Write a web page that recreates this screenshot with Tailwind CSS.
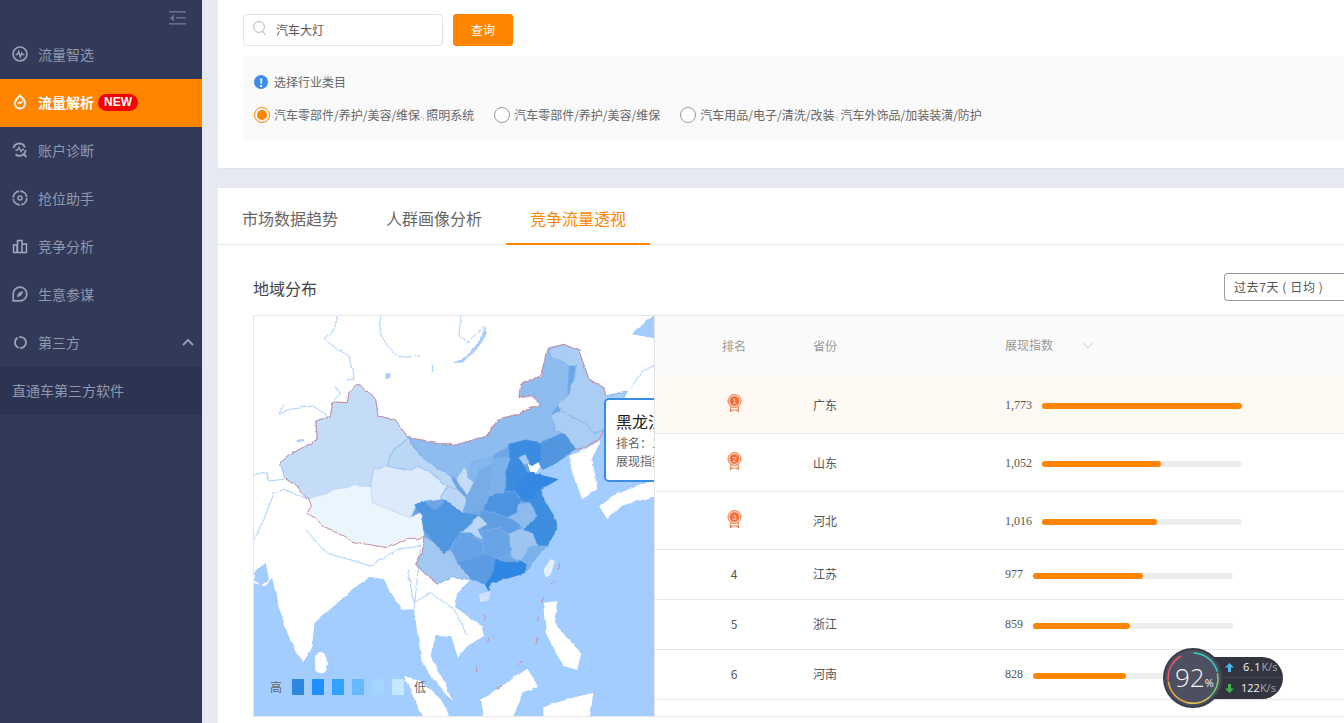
<!DOCTYPE html>
<html lang="zh">
<head>
  <meta charset="UTF-8" />
  <title>流量解析</title>
  <script src="https://cdn.jsdelivr.net/npm/@tailwindcss/browser@4"></script>
</head>
<body class="font-['Noto_Sans_CJK_SC','Liberation_Sans',sans-serif] text-[#666] overflow-hidden">
<div class="relative flex w-[1344px] h-[723px] overflow-hidden bg-[#e6e9f2]">

  <!-- sidebar -->
  <aside class="w-[202px] shrink-0 bg-[#313a59] text-[14px] text-[#9298aa]">
    <div class="h-[31px] flex justify-end pt-[11px] pr-[16px]">
      <svg width="17" height="14" viewBox="0 0 17 14" fill="#666e88"><rect x="0" y="0" width="17" height="1.6"/><rect x="7" y="6" width="10" height="1.6"/><rect x="0" y="12" width="17" height="1.6"/><path d="M5 3.5v7L0.5 7z"/></svg>
    </div>
    <div class="h-12 flex items-center pl-[12px] gap-[10px] pb-[2px]">
      <svg width="16" height="16" viewBox="0 0 16 16" fill="none" stroke="#9ba0b2" stroke-width="1.7"><circle cx="8" cy="8" r="7"/><path d="M3.5 8.5h2l1.2-3 1.6 5.5 1.4-4 .8 1.500h2" stroke-width="1.4"/></svg>
      <span>流量智选</span>
    </div>
    <div class="h-12 flex items-center pl-[12px] gap-[10px] pb-[2px] bg-[#ff8400] text-white font-bold">
      <svg width="16" height="16" viewBox="0 0 16 16" fill="none" stroke="#fff" stroke-width="1.8"><path d="M8 1.5c1 1.6 5 3.6 5 8a5 5 0 0 1-10 0c0-4.400 4-6.400 5-8z"/><path d="M5.500 10l2-2 1 1.200 2-2" stroke-width="1.300"/></svg>
      <span>流量解析</span>
      <span class="-ml-[6px] w-[40px] h-[17px] rounded-full bg-[#f60000] text-[12px] leading-[17px] text-center font-['Liberation_Sans',sans-serif]">NEW</span>
    </div>
    <div class="h-12 flex items-center pl-[12px] gap-[10px] pb-[2px]">
      <svg width="16" height="16" viewBox="0 0 16 16" fill="none" stroke="#9ba0b2" stroke-width="1.9"><path d="M1.500 6A6 6 0 0 1 13 5.500M13.500 8a6 6 0 0 1-10 4.300"/><path d="M11 11.500l3.500 3.500"/><path d="M3.500 8h2l1.500-2.500 2 4 1.500-2h1.500" stroke-width="1.400"/></svg>
      <span>账户诊断</span>
    </div>
    <div class="h-12 flex items-center pl-[12px] gap-[10px] pb-[2px]">
      <svg width="16" height="16" viewBox="0 0 16 16" fill="none" stroke="#9ba0b2" stroke-width="1.800"><circle cx="8" cy="8" r="6.800" stroke-dasharray="9.500 1.200"/><circle cx="8" cy="8" r="2" stroke-width="1.500"/></svg>
      <span>抢位助手</span>
    </div>
    <div class="h-12 flex items-center pl-[12px] gap-[10px] pb-[2px]">
      <svg width="16" height="16" viewBox="0 0 16 16" fill="none" stroke="#a4a9b9" stroke-width="1.500"><path d="M1.500 14.500V7h3.500v7.500M5.500 14.500V2.500h4.500v12M10 14.500V6h4.500v8.500M1 14.500h14"/></svg>
      <span>竞争分析</span>
    </div>
    <div class="h-12 flex items-center pl-[12px] gap-[10px] pb-[2px]">
      <svg width="16" height="16" viewBox="0 0 16 16" fill="none" stroke="#9ba0b2" stroke-width="1.700"><path d="M1.200 14.800V8A6.800 6.800 0 1 1 8 14.800z"/><path d="M5 11c.2-3.300 2-5 6-6-.5 4-2.500 5.800-6 6z" fill="#9ba0b2" stroke="none"/></svg>
      <span>生意参谋</span>
    </div>
    <div class="h-12 flex items-center pl-[14px] gap-[11px] pr-[8px] pb-[2px]">
      <svg width="13" height="13" viewBox="0 0 13 13" fill="none" stroke="#a4a9b9" stroke-width="1.700"><circle cx="6.500" cy="6.500" r="5.500" stroke-dasharray="9 1.200 12 1.500 10 1"/></svg>
      <span>第三方</span>
      <svg class="ml-auto" width="12" height="8" viewBox="0 0 12 8" fill="none" stroke="#9ba0b2" stroke-width="1.800"><path d="M1 7l5-5 5 5"/></svg>
    </div>
    <div class="h-12 flex items-center pl-[12px] pb-[2px] bg-[#2c3452] text-[14px]">直通车第三方软件</div>
  </aside>

  <main class="flex-1 min-w-0 pl-4">
    <!-- search card -->
    <section class="h-[169px] bg-white pt-[14px] pl-[25px] border-b border-[#dfe2ea] rounded-bl-[3px]">
      <div class="flex gap-[10px] text-[12px]">
        <div class="w-[200px] h-8 flex items-center border border-[#e3e3e3] rounded-[4px] pl-[9px] gap-[9px]">
          <svg class="-mt-[3px]" width="14" height="16" viewBox="0 0 14 16" fill="none" stroke="#b5b5b5" stroke-width="1"><circle cx="6" cy="6" r="5.400"/><path d="M9.500 10l3 4"/></svg>
          <span class="text-[#555]">汽车大灯</span>
        </div>
        <button class="w-[60px] h-8 rounded-[3px] bg-[#ff8400] text-white">查询</button>
      </div>
      <div class="mt-[10px] h-[84px] bg-[#fafafa] pl-[11px] pt-[17px] text-[12px]">
        <div class="flex items-center gap-[6px] h-[18px]">
          <span class="w-[14px] h-[14px] rounded-full bg-[#3f8cf0] text-white text-[11px] leading-[14px] text-center font-bold">!</span>
          <span class="text-[#666]">选择行业类目</span>
        </div>
        <div class="mt-[15px] flex items-center h-[18px] text-[#666]">
          <span class="flex items-center justify-center w-4 h-4 rounded-full border border-[#ff8400] mr-[4px]"><span class="w-[10px] h-[10px] rounded-full bg-[#ff8400]"></span></span>
          <span class="mr-[20px]">汽车零部件/养护/美容/维保<span class="text-[6px] text-[#333]">┐</span>照明系统</span>
          <span class="w-4 h-4 rounded-full border border-[#999] bg-white mr-[4px]"></span>
          <span class="mr-[20px]">汽车零部件/养护/美容/维保</span>
          <span class="w-4 h-4 rounded-full border border-[#999] bg-white mr-[4px]"></span>
          <span>汽车用品/电子/清洗/改装<span class="text-[6px] text-[#333]">┐</span>汽车外饰品/加装装潢/防护</span>
        </div>
      </div>
    </section>

    <!-- data card -->
    <section class="mt-[19px] h-[535px] bg-white">
      <div class="h-[57px] flex border-b border-[#e5e5e5] text-[16px] text-[#666]">
        <div class="w-[144px] h-[57px] leading-[60px] text-center">市场数据趋势</div>
        <div class="w-[144px] h-[57px] leading-[60px] text-center">人群画像分析</div>
        <div class="w-[144px] h-[57px] leading-[60px] text-center text-[#ff8400] border-b-2 border-[#ff8400]">竞争流量透视</div>
      </div>
      <div class="h-[70px] flex pl-[35px] pt-[28px] justify-between">
        <h2 class="text-[16px] leading-[30px] text-[#444]">地域分布</h2>
        <div class="w-[120px] h-7 border border-[#9a98a8] rounded-l-[4px] rounded-r-none border-r-0 pl-[9px] text-[12px] leading-[26px] tracking-[0.6px] text-[#555]">过去7天 ( 日均 )</div>
      </div>

      <div class="ml-[35px] flex h-[402px] border-y border-[#e5e5e5]">
        <!-- map -->
        <div class="relative w-[402px] shrink-0 overflow-hidden border-x border-[#e5e5e5] bg-white">
          <svg class="block" width="400" height="400" viewBox="0 0 1200 1200">
            <defs>
              <filter id="rough" x="-5%" y="-5%" width="110%" height="110%">
                <feTurbulence type="fractalNoise" baseFrequency="0.035" numOctaves="3" seed="4"/>
                <feDisplacementMap in="SourceGraphic" scale="10" xChannelSelector="R" yChannelSelector="G"/>
              </filter>
            </defs>
            <g filter="url(#rough)">
              <path fill="#a3ccff" d="M-40 790 30 810 55 785 70 860 100 950 130 1020 150 1035 172 1000 182 920 240 870 300 815 350 782 390 790 420 850 450 880 480 880 480 740 640 740 700 740 800 700 850 600 840 480 880 420 950 380 1030 350 1060 300 1240 260 1240 1240 -40 1240z"/>
              <path fill="#a3ccff" d="M1130 55 1170 20 1240 -30 1240 75 1165 60z"/>
              <g fill="#fff">
                <path d="M440 740 505 740 550 805 590 785 650 790 640 800 610 830 600 870 640 900 682 930 690 960 640 990 612 1025 592 962 545 960 530 1020 562 1080 600 1160 570 1125 530 1080 502 1030 490 950 480 880 440 880z"/>
                <path d="M450 1080 500 1095 560 1150 610 1240 525 1240 470 1125z"/>
                <ellipse cx="201" cy="1040" rx="18" ry="32"/>
                <path d="M682 1150 820 1058 852 1110 805 1130 765 1240 690 1240z"/>
                <path d="M870 860 910 855 900 920 935 960 982 1012 970 1062 930 1050 905 1010 880 960zM868 1172 940 1150 1015 1130 1000 1240 868 1240z"/>
                <path d="M945 420 990 402 1040 372 1015 430 1030 520 985 550 955 470z"/>
                <path d="M1035 570 1075 540 1150 510 1240 480 1240 530 1100 570 1060 610z"/>
              </g>
              <g fill="none" stroke="#a8d0ff" stroke-width="3">
                <path d="M250 0 235 50 210 70 250 100 285 120 300 190 280 190M380 0 375 45 400 90 435 125 500 120M245 210 260 235 240 255M90 265 75 295 110 280 175 270 225 300"/>
                <path d="M620 0 615 60 640 80 690 30"/>
                <path d="M0 670 30 610 60 530 90 520 165 550M155 640 215 710 350 750 430 700 500 690M460 760 480 860 530 830 600 880 640 960M500 700 490 790 480 880"/>
                <path d="M0 480 40 470 40 495 90 490M535 145 535 170M1130 220 1160 170 1240 125"/>
              </g>
              <path fill="#a3ccff" d="M695 25 680 70 640 120 595 140 625 140 670 100 695 60zM395 172h14v14h-14zM125 370h25v6h-25zM0 770 35 740 45 790 20 810 0 790z"/>

              <!-- base under the eastern provinces -->
              <path fill="#6ca6e7" d="M462 365 600 388 700 360 730 310 790 295 860 265 830 240 795 245 800 205 860 180 880 100 930 85 975 105 1005 190 1050 215 1055 240 1120 225 1100 260 1060 300 1050 345 1035 370 965 400 900 445 865 460 850 425 820 440 830 470 870 480 912 490 860 520 870 550 905 610 908 640 880 690 850 720 815 770 750 790 710 800 705 825 692 805 650 790 590 785 550 805 510 770 485 745 505 710 510 660 500 590 470 605 490 560 560 550 578 510 530 470 490 450z"/>
              <g stroke="#7fb2ec" stroke-width="2" stroke-linejoin="round">
                <path fill="#c4dcf7" d="M305 205 322 208 365 250 372 300 425 312 462 365 420 400 398 450 360 460 350 513 305 510 240 522 165 550 120 505 92 487 78 440 110 415 190 370 185 315 228 300 238 258 280 260 285 230z"/>
                <path fill="#ebf5fe" stroke="#d5e6fa" d="M165 550 240 522 305 510 350 513 355 560 400 580 470 605 500 590 510 660 495 670 460 670 400 695 340 685 290 675 250 650 210 630 160 590 172 570z"/>
                <path fill="#dcebfb" stroke="#b8d5f6" d="M350 513 360 460 400 450 470 465 490 450 530 470 578 510 560 550 490 560 470 605 400 580 355 560z"/>
                <path fill="#bbd7f6" d="M400 450 420 400 462 368 500 420 540 450 590 480 610 520 640 550 625 590 600 570 578 510 530 470 490 450 470 465z"/>
                <path fill="#8fbcee" d="M462 365 600 388 700 360 730 310 790 295 860 265 830 240 795 245 800 205 860 180 880 100 890 120 945 150 940 240 910 265 895 295 905 345 930 350 860 380 815 372 765 385 720 420 650 440 640 480 610 490 590 480 540 450 500 420z"/>
                <path fill="#a9cdf3" d="M880 95 930 85 975 105 1005 190 1050 215 1055 240 1120 225 1100 260 1060 300 1050 345 1020 350 990 320 920 285 910 265 945 235 970 150 945 150 890 120z"/>
                <path fill="#a9cdf3" d="M895 295 920 285 990 320 1020 350 1050 345 1035 370 990 395 965 400 930 350 905 345z"/>
                <path fill="#5296e0" stroke="#5296e0" d="M860 380 930 350 965 400 900 445 865 460 850 425z"/>
                <path fill="#c5dcf6" d="M610 490 630 450 645 480 670 510 640 540 620 510z"/>
                <path fill="#86b7ec" d="M640 480 650 440 720 420 715 445 680 460 640 540 670 510z"/>
                <path fill="#7cb1e9" d="M705 540 720 430 770 420 755 470 760 510 750 530z"/>
                <path fill="#76ade8" d="M640 540 680 460 715 445 705 540 690 580 625 590z"/>
                <path fill="#bcd6f5" d="M578 510 610 520 640 550 625 590 575 555 560 550z"/>
                <path fill="#3b8be0" stroke="#3b8be0" d="M765 385 815 372 860 380 860 430 830 450 815 430 795 425 820 470 790 525 750 530 760 510 755 470 770 430z"/>
                <path fill="#a4cbf2" stroke="#a4cbf2" d="M795 425 815 415 825 440 810 445z"/>
                <path fill="#3488e2" stroke="#3488e2" d="M780 525 820 470 870 480 912 490 860 520 830 550 800 548z"/>
                <path fill="#4d94e0" d="M705 540 750 530 780 525 800 548 790 590 760 605 690 580z"/>
                <path fill="#3d8de2" stroke="#3d8de2" d="M800 548 830 550 860 520 870 550 905 610 908 625 850 600 840 580 815 555z"/>
                <path fill="#8dbbee" d="M790 590 790 565 825 555 840 580 850 600 810 640 795 625 760 605z"/>
                <path fill="#3d8ee1" stroke="#3d8ee1" d="M850 600 908 625 908 640 880 690 850 690 835 650 810 640z"/>
                <path fill="#5f9ee3" d="M690 580 760 605 795 625 800 640 765 655 740 635 685 645 670 600z"/>
                <path fill="#9dc5f0" stroke="#9dc5f0" d="M765 655 800 640 835 650 850 690 830 690 800 735 770 715z"/>
                <path fill="#7cb1e9" d="M800 735 830 690 880 690 850 720 815 770 815 745z"/>
                <path fill="#4f96e0" stroke="#4f96e0" d="M480 565 510 560 545 585 575 555 625 590 670 600 620 650 590 690 570 715 540 680 510 640 500 590z"/>
                <path fill="#bcd6f5" stroke="#bcd6f5" d="M620 650 650 630 670 600 700 625 670 640 685 670 650 650z"/>
                <path fill="#69a5e6" d="M685 645 740 635 765 655 770 715 725 730 690 715 685 680z"/>
                <path fill="#65a2e6" d="M590 700 620 650 650 650 685 680 690 715 610 740z"/>
                <path fill="#a0c8f1" d="M510 660 540 680 570 715 590 700 610 740 650 790 590 785 550 805 510 770 485 745 505 710z"/>
                <path fill="#5a9be3" stroke="#5a9be3" d="M610 740 690 715 725 730 720 760 692 805 650 790z"/>
                <path fill="#2f87e3" stroke="#2f87e3" d="M725 730 770 740 800 735 815 745 815 770 750 790 710 800 705 825 692 805 720 765z"/>
                <path fill="#cfe3fb" stroke="none" d="M675 835 710 825 700 855 680 858z"/>
                <path fill="#e2f0fd" stroke="none" d="M870 760 890 730 903 735 890 775 878 785z"/>
              </g>
              <g fill="none" stroke="#cf8da0" stroke-width="3">
                <path d="M78 440 110 415 190 370 185 315 228 300 238 258 280 260 285 230 305 205 322 208 365 250 372 300 425 312 462 365 600 388 700 360 730 310 790 295 860 265 830 240 795 245 800 205 860 180 880 100 930 85 975 105 1005 190 1050 215 1055 240"/>
                <path d="M92 487 120 505 165 550 172 570 160 590 210 630 250 650 290 675 340 685 400 695 460 670 495 670 510 660 505 710 485 745 510 770 550 805"/>
                <path d="M965 400 990 395 1035 370 1050 345"/>
                <path d="M918 740 914 760M903 795 888 810M870 843 862 860M852 898V916M853 966 845 985M803 1035 793 1048M745 1110 730 1116M668 1052V1070M705 965 700 980M688 895 694 912"/>
              </g>
            </g>
          </svg>

          <!-- legend -->
          <div class="absolute left-[16px] top-[363px] flex items-center h-4 text-[12px] text-[#666]">
            <span class="w-[22px]">高</span>
            <span class="w-3 h-4 mr-2 bg-[#3087e0]"></span>
            <span class="w-3 h-4 mr-2 bg-[#1e90ff]"></span>
            <span class="w-3 h-4 mr-2 bg-[#33a1ff]"></span>
            <span class="w-3 h-4 mr-2 bg-[#66b8ff]"></span>
            <span class="w-3 h-4 mr-2 bg-[#a3d5ff]"></span>
            <span class="w-3 h-4 mr-2 bg-[#c6e8ff]"></span>
            <span class="ml-[2px]">低</span>
          </div>

          <!-- tooltip -->
          <div class="absolute left-[350px] top-[82px] w-[180px] h-[84px] bg-white border-2 border-[#3a8de0] rounded-[5px] pl-[10px] pt-[10px] whitespace-nowrap">
            <div class="text-[16px] leading-[22px] text-[#222]">黑龙江</div>
            <div class="mt-[2px] text-[12px] leading-[17px] text-[#666]">排名：1</div>
            <div class="mt-[1px] text-[12px] leading-[17px] text-[#666]">展现指数：</div>
          </div>
        </div>

        <!-- table -->
        <div class="flex-1 text-[12px] text-[#555]">
          <div class="h-[60px] flex items-center bg-[#fafafa] text-[#999]">
            <div class="w-[158px] text-center">排名</div>
            <div class="w-[192px]">省份</div>
            <div class="flex items-center -mt-[2px]">展现指数
              <svg class="ml-[29px]" width="12" height="7" viewBox="0 0 12 7" fill="none" stroke="#dedede" stroke-width="1.200"><path d="M1 1l5 5 5-5"/></svg>
            </div>
          </div>

          <div class="h-[58px] flex items-center border-b border-[#e5e5e5] bg-[#fff9f3]">
            <div class="w-[158px] flex justify-center -mt-[3px]">
              <svg width="15" height="18" viewBox="0 0 15 18"><path d="M4 11.500 3.500 17.500 5.500 16h4l2 1.500-.5-6z" fill="none" stroke="#f08050" stroke-width="1.200"/><circle cx="7.500" cy="7" r="6.500" fill="#fbd5c2" stroke="#f07c48"/><circle cx="7.500" cy="7" r="4.800" fill="#ee6f3d"/><text x="7.500" y="10" text-anchor="middle" font-size="8" fill="#ffd9c4" font-family="Liberation Sans">1</text></svg>
            </div>
            <div class="w-[192px]">广东</div>
            <div class="w-[37px] font-['Liberation_Serif',serif]">1,773</div>
            <div class="w-[200px] h-[6px] mt-[3px] rounded-full bg-[#eeeeee]"><div class="h-[6px] rounded-full bg-[#ff8400]" style="width:200px"></div></div>
          </div>

          <div class="h-[58px] flex items-center border-b border-[#e5e5e5]">
            <div class="w-[158px] flex justify-center -mt-[3px]">
              <svg width="15" height="18" viewBox="0 0 15 18"><path d="M4 11.500 3.500 17.500 5.500 16h4l2 1.500-.5-6z" fill="none" stroke="#f08050" stroke-width="1.200"/><circle cx="7.500" cy="7" r="6.500" fill="#fbd5c2" stroke="#f07c48"/><circle cx="7.500" cy="7" r="4.800" fill="#ee6f3d"/><text x="7.500" y="10" text-anchor="middle" font-size="8" fill="#ffd9c4" font-family="Liberation Sans">2</text></svg>
            </div>
            <div class="w-[192px]">山东</div>
            <div class="w-[37px] font-['Liberation_Serif',serif]">1,052</div>
            <div class="w-[200px] h-[6px] mt-[3px] rounded-full bg-[#eeeeee]"><div class="h-[6px] rounded-full bg-[#ff8400]" style="width:119px"></div></div>
          </div>

          <div class="h-[58px] flex items-center border-b border-[#e5e5e5]">
            <div class="w-[158px] flex justify-center -mt-[3px]">
              <svg width="15" height="18" viewBox="0 0 15 18"><path d="M4 11.500 3.500 17.500 5.500 16h4l2 1.500-.5-6z" fill="none" stroke="#f08050" stroke-width="1.200"/><circle cx="7.500" cy="7" r="6.500" fill="#fbd5c2" stroke="#f07c48"/><circle cx="7.500" cy="7" r="4.800" fill="#ee6f3d"/><text x="7.500" y="10" text-anchor="middle" font-size="8" fill="#ffd9c4" font-family="Liberation Sans">3</text></svg>
            </div>
            <div class="w-[192px]">河北</div>
            <div class="w-[37px] font-['Liberation_Serif',serif]">1,016</div>
            <div class="w-[200px] h-[6px] mt-[3px] rounded-full bg-[#eeeeee]"><div class="h-[6px] rounded-full bg-[#ff8400]" style="width:115px"></div></div>
          </div>

          <div class="h-[50px] flex items-center pb-[2px] border-b border-[#e5e5e5]">
            <div class="w-[158px] text-center">4</div>
            <div class="w-[192px]">江苏</div>
            <div class="w-[28px] font-['Liberation_Serif',serif]">977</div>
            <div class="w-[200px] h-[6px] mt-[5px] rounded-full bg-[#eeeeee]"><div class="h-[6px] rounded-full bg-[#ff8400]" style="width:110px"></div></div>
          </div>

          <div class="h-[50px] flex items-center pb-[2px] border-b border-[#e5e5e5]">
            <div class="w-[158px] text-center">5</div>
            <div class="w-[192px]">浙江</div>
            <div class="w-[28px] font-['Liberation_Serif',serif]">859</div>
            <div class="w-[200px] h-[6px] mt-[5px] rounded-full bg-[#eeeeee]"><div class="h-[6px] rounded-full bg-[#ff8400]" style="width:97px"></div></div>
          </div>

          <div class="h-[50px] flex items-center pb-[2px] border-b border-[#e5e5e5]">
            <div class="w-[158px] text-center">6</div>
            <div class="w-[192px]">河南</div>
            <div class="w-[28px] font-['Liberation_Serif',serif]">828</div>
            <div class="w-[200px] h-[6px] mt-[5px] rounded-full bg-[#eeeeee]"><div class="h-[6px] rounded-full bg-[#ff8400]" style="width:93px"></div></div>
          </div>
        </div>
      </div>
    </section>
  </main>

  <!-- speed widget -->
  <div class="absolute left-[1163px] top-[648px] w-[120px] h-[60px] font-['Open_Sans',sans-serif]">
    <div class="absolute left-[30px] top-[9px] w-[90px] h-[42px] rounded-r-full bg-[#32353f] pl-[32px] text-[11px] text-[#f2f2f2]">
      <div class="flex items-center h-[21px] border-b border-[#454852]">
        <svg width="9" height="9" viewBox="0 0 9 9" fill="#4db4f0"><path d="M4.500 0 9 4.500H6V9H3V4.500H0z"/></svg>
        <span class="ml-[9px] tracking-[1px]">6.1</span><span class="text-[#a2a5ad]">K/s</span>
      </div>
      <div class="flex items-center h-[21px]">
        <svg width="9" height="9" viewBox="0 0 9 9" fill="#3fb24a"><path d="M4.500 9 9 4.500H6V0H3V4.500H0z"/></svg>
        <span class="ml-[7px]">122</span><span class="text-[#a2a5ad]">K/s</span>
      </div>
    </div>
    <div class="absolute left-0 top-0 w-[60px] h-[60px] rounded-full bg-[#4c5060] border-2 border-[#3a3d49]">
      <svg class="absolute -left-[2px] -top-[2px]" width="60" height="60" viewBox="0 0 60 60" fill="none" stroke-width="1.500" stroke-linecap="round">
        <path d="M31 5a25 25 0 0 1 23 18" stroke="#35d0c0"/>
        <path d="M54.500 26a25 25 0 0 1-8 23" stroke="#7ccf70"/>
        <path d="M46 49.500A25 25 0 0 1 24 54.500" stroke="#e8c850"/>
        <path d="M24 54.500A25 25 0 0 1 5.500 34" stroke="#eeb040"/>
        <path d="M5.200 32A25 25 0 0 1 17.500 8.500" stroke="#e85868"/>
      </svg>
      <div class="absolute left-[10px] top-[10px] text-[26px] leading-[34px] font-light text-[#f4f4f4]">92<span class="text-[11px] font-normal">%</span></div>
    </div>
  </div>
</div>
</body>
</html>
